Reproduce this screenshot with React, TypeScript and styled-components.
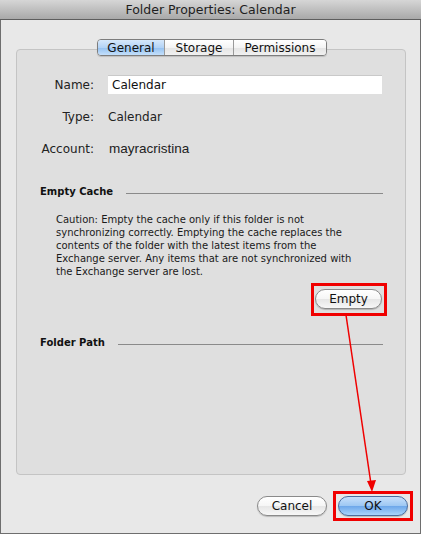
import React from 'react';
import styled, { createGlobalStyle, css } from 'styled-components';

const GlobalStyle = createGlobalStyle`
  html, body {
    margin: 0;
    padding: 0;
    background: #ffffff;
  }
  body {
    font-family: "DejaVu Sans", "Noto Sans", sans-serif;
    color: #1a1a1a;
  }
`;

const Window = styled.div`
  position: relative;
  width: 421px;
  height: 534px;
  box-sizing: border-box;
  border: 1px solid #6e6e6e;
  border-top: none;
  background: #e8e8e8;
  display: flex;
  flex-direction: column;
`;

const TitleBar = styled.div`
  height: 19px;
  flex: none;
  display: flex;
  align-items: center;
  justify-content: center;
  background: linear-gradient(#d6d6d6, #a9a9a9);
  border-bottom: 1px solid #5e5e5e;
  font-size: 12.5px;
  color: #1e1e1e;
  margin: 0 -1px;
`;

const Body = styled.div`
  flex: 1;
  display: flex;
  flex-direction: column;
  padding: 19px 14px 0 15px;
`;

const Tabs = styled.div`
  position: relative;
  z-index: 1;
  align-self: flex-start;
  margin-left: 81px;
  display: flex;
  height: 17px;
  border: 1px solid #7d7d7d;
  border-radius: 4px;
  overflow: hidden;
  box-sizing: border-box;
  box-shadow: 0 1px 1px rgba(0, 0, 0, 0.15);
`;

const Tab = styled.div<{ $active?: boolean; $w: number }>`
  width: ${({ $w }) => $w}px;
  display: flex;
  align-items: center;
  justify-content: center;
  font-size: 12px;
  color: #111;
  border-left: 1px solid #9a9a9a;
  &:first-child {
    border-left: none;
  }
  background: linear-gradient(#ffffff 0%, #f4f4f4 50%, #e4e4e4 51%, #f1f1f1 100%);
  ${({ $active }) =>
    $active &&
    css`
      background: linear-gradient(#d6e8fb 0%, #b3d3f6 50%, #93c0f0 51%, #c4e0fb 100%);
    `}
`;

const GroupBox = styled.div`
  margin-top: -7px;
  height: 426px;
  box-sizing: border-box;
  background: #dfdfdf;
  border: 1px solid #c4c4c4;
  border-radius: 4px;
  display: flex;
  flex-direction: column;
  padding-top: 25px;
`;

const FormGrid = styled.div`
  display: grid;
  grid-template-columns: 77px 274px;
  grid-auto-rows: 19px;
  column-gap: 14px;
  row-gap: 13px;
  align-items: center;
`;

const Label = styled.div`
  text-align: right;
  font-size: 12px;
  color: #222;
`;

const Value = styled.div<{ $helvetica?: boolean }>`
  font-size: 12px;
  color: #222;
  ${({ $helvetica }) =>
    $helvetica &&
    css`
      font-family: "Liberation Sans", Arial, sans-serif;
      font-size: 13.5px;
      padding-left: 1px;
    `}
`;

const TextInput = styled.div`
  height: 19px;
  box-sizing: border-box;
  background: #ffffff;
  border-top: 1px solid #c9c9c9;
  padding: 2px 4px;
  font-size: 12px;
  color: #111;
  line-height: 15px;
`;

const SectionHeader = styled.div<{ $top: number }>`
  display: flex;
  align-items: center;
  gap: 13px;
  margin-top: ${({ $top }) => $top}px;
  padding: 0 22px 0 23px;
  height: 13px;
  font-size: 10px;
  font-weight: bold;
  color: #111;
`;

const Rule = styled.div`
  flex: 1;
  height: 1px;
  background: #8a8a8a;
  margin-top: 3px;
`;

const Caution = styled.p`
  margin: 15px 0 0 39px;
  font-size: 10px;
  line-height: 13px;
  color: #1a1a1a;
`;

const Highlight = styled.div<{ $pad: string }>`
  border: 3px solid #f00000;
  padding: ${({ $pad }) => $pad};
  display: flex;
`;

const EmptyRow = styled.div`
  display: flex;
  justify-content: flex-end;
  margin: 5px 18px 0 0;
`;

const PillButton = styled.div<{ $w: number; $primary?: boolean }>`
  width: ${({ $w }) => $w}px;
  height: 20px;
  box-sizing: border-box;
  border-radius: 10px;
  border: 1px solid #8a8a8a;
  display: flex;
  align-items: center;
  justify-content: center;
  font-size: 12px;
  color: #111;
  background: linear-gradient(#ffffff 0%, #f6f6f6 48%, #e6e6e6 52%, #f7f7f7 100%);
  box-shadow: 0 1px 1px rgba(0, 0, 0, 0.2);
  ${({ $primary }) =>
    $primary &&
    css`
      border-color: #4a6e9e;
      background: linear-gradient(#c7e0fb 0%, #9ec8f3 48%, #6ea8ea 52%, #a9d4fb 100%);
    `}
`;

const Footer = styled.div`
  display: flex;
  justify-content: flex-end;
  align-items: center;
  gap: 6px;
  margin-top: 16px;
  margin-right: -7px;
`;

const Arrow = styled.svg`
  position: absolute;
  left: -1px;
  top: 0;
  pointer-events: none;
`;

const App: React.FC = () => {
  return (
    <>
      <GlobalStyle />
      <Window>
        <TitleBar>Folder Properties: Calendar</TitleBar>
        <Body>
          <Tabs>
            <Tab $active $w={66}>General</Tab>
            <Tab $w={68}>Storage</Tab>
            <Tab $w={92}>Permissions</Tab>
          </Tabs>
          <GroupBox>
            <FormGrid>
              <Label>Name:</Label>
              <TextInput>Calendar</TextInput>
              <Label>Type:</Label>
              <Value>Calendar</Value>
              <Label>Account:</Label>
              <Value $helvetica>mayracristina</Value>
            </FormGrid>
            <SectionHeader $top={27}>
              Empty Cache
              <Rule />
            </SectionHeader>
            <Caution>
              Caution: Empty the cache only if this folder is not
              <br />
              synchronizing correctly. Emptying the cache replaces the
              <br />
              contents of the folder with the latest items from the
              <br />
              Exchange server. Any items that are not synchronized with
              <br />
              the Exchange server are lost.
            </Caution>
            <EmptyRow>
              <Highlight $pad="3px 2px 4px 1px">
                <PillButton $w={67}>Empty</PillButton>
              </Highlight>
            </EmptyRow>
            <SectionHeader $top={20}>
              Folder Path
              <Rule />
            </SectionHeader>
          </GroupBox>
          <Footer>
            <PillButton $w={70}>Cancel</PillButton>
            <Highlight $pad="2px">
              <PillButton $w={70} $primary>
                OK
              </PillButton>
            </Highlight>
          </Footer>
        </Body>
        <Arrow width="421" height="535" viewBox="0 0 421 535">
          <line x1="346" y1="315" x2="371" y2="484" stroke="#f00000" strokeWidth="1.5" />
          <polygon points="372,492 367,481 376,480" fill="#f00000" />
        </Arrow>
      </Window>
    </>
  );
};

export default App;
